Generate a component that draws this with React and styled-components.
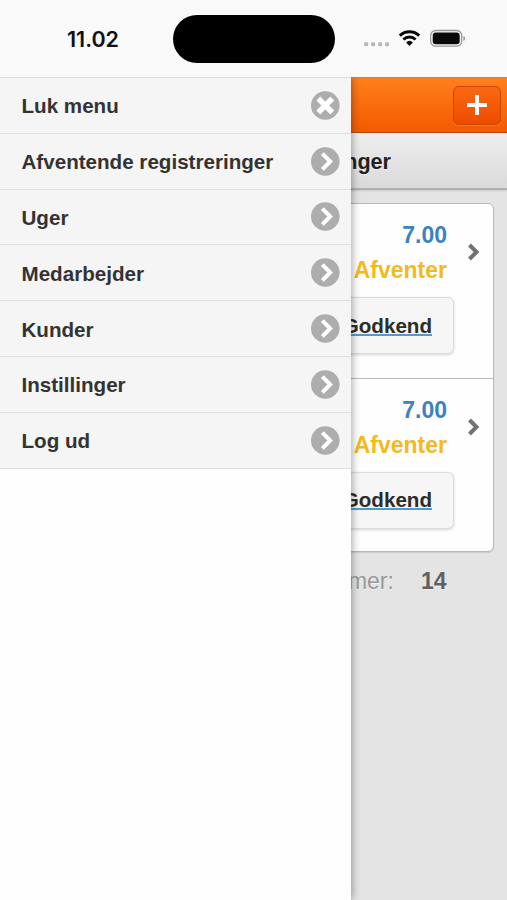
import styled, { createGlobalStyle } from "styled-components";

const GlobalStyle = createGlobalStyle`
  *, *::before, *::after {
    box-sizing: border-box;
  }

  body {
    margin: 0;
    background-color: #e4e4e4;
    font-family: "Liberation Sans", Arial, sans-serif;
    font-size: 20.6px;
  }

  h1, p, ul {
    margin: 0;
    padding: 0;
  }
`;

const Screen = styled.div`
  display: flex;
  flex-direction: column;
  width: 507px;
  height: 900px;
  overflow: hidden;
`;

const StatusBar = styled.header`
  display: grid;
  grid-template-columns: 173px 162px 1fr;
  align-items: center;
  flex: none;
  height: 77px;
  background-color: #f9f9f9;
`;

const Time = styled.time`
  padding-left: 67px;
  color: #111;
  font-family: Inter, sans-serif;
  font-size: 21.5px;
  font-weight: 600;
`;

const Island = styled.div`
  height: 48px;
  border-radius: 24px;
  background-color: #000;
`;

const StatusIcons = styled.div`
  display: flex;
  padding-left: 28px;

  svg {
    display: block;
  }
`;

const Body = styled.div`
  position: relative;
  flex: 1;
  min-height: 0;
`;

const Drawer = styled.nav`
  position: absolute;
  top: 0;
  bottom: 0;
  left: 0;
  width: 351px;
  background-color: #fefefe;
  box-shadow: 1px 0 8px rgba(0, 0, 0, 0.36);
  clip-path: inset(0 -20px 0 0);
`;

const MenuList = styled.ul`
  list-style: none;
  border-top: 1px solid #dedede;
`;

const MenuItem = styled.li`
  display: flex;
  align-items: center;
  justify-content: space-between;
  height: 55.8px;
  padding: 0 11px 0 21.5px;
  border-bottom: 1.5px solid #dfdfdf;
  background-color: #f5f5f5;
  color: #333;
  font-weight: 700;
  text-shadow: 0 1px 0 #f3f3f3;

  svg {
    flex: none;
  }
`;

const MenuLabel = styled.span`
  padding-top: 2px;
`;

const Page = styled.main`
  display: flex;
  flex-direction: column;
  height: 100%;
  background-color: #e4e4e4;
`;

const Toolbar = styled.div`
  display: flex;
  align-items: center;
  justify-content: flex-end;
  flex: none;
  height: 56px;
  padding-right: 6px;
  border-top: 1px solid #e87a20;
  border-bottom: 1px solid #b84a08;
  background: linear-gradient(#ff7f1c, #f45a00);
`;

const AddButton = styled.button`
  display: grid;
  place-items: center;
  width: 48px;
  height: 39px;
  padding: 0;
  border: 1.5px solid #c94600;
  border-radius: 6px;
  background: linear-gradient(#fa6812, #ee4c00);
  box-shadow: 0 1px 0 rgba(255, 160, 80, 0.35);
`;

const TitleBar = styled.div`
  display: flex;
  align-items: center;
  justify-content: flex-end;
  flex: none;
  height: 57px;
  padding: 3px 116px 0 0;
  border-bottom: 2px solid #b0b0b0;
  background: linear-gradient(#eee, #dadada);
  box-shadow: 0 1px 2px rgba(0, 0, 0, 0.12);
`;

const Title = styled.h1`
  color: #222;
  font-size: 21.6px;
  white-space: nowrap;
  text-shadow: 0 1px 0 #eee;
`;

const Card = styled.section`
  margin: 13px 13px 0;
  border: 1.5px solid #b8b8b8;
  border-radius: 6px;
  background-color: #fefefe;
  box-shadow: 0 1px 1px rgba(0, 0, 0, 0.12);
`;

const Entry = styled.article`
  display: grid;
  grid-template-columns: 1fr 46px;
  height: 173.5px;

  & + & {
    border-top: 1.5px solid #bbb;
  }
`;

const EntryInfo = styled.div`
  display: flex;
  flex-direction: column;
  align-items: flex-end;
  padding-top: 14px;
  font-size: 23px;
  font-weight: 700;
  line-height: 35px;
`;

const Hours = styled.p`
  color: #3a82c0;
`;

const State = styled.p`
  color: #f3b91d;
`;

const Approve = styled.button`
  width: 134px;
  height: 57px;
  margin: 9px -7px 0 0;
  padding: 0 21px 0 0;
  border: 1.5px solid #dcdcdc;
  border-radius: 6px;
  background-color: #f6f6f6;
  box-shadow: 0 1px 3px rgba(0, 0, 0, 0.16);
  color: #2c2c2c;
  font: 700 20.6px "Liberation Sans", Arial, sans-serif;
  text-align: right;
  text-decoration: underline;
  text-decoration-color: #5598ce;
  text-decoration-thickness: 1.5px;
  text-underline-offset: 1px;
  text-decoration-skip-ink: none;
`;

const EntryArrow = styled.div`
  padding: 38px 0 0 20px;
`;

const Total = styled.p`
  display: flex;
  justify-content: flex-end;
  gap: 27px;
  padding: 15px 60.5px 0 0;
  color: #999;
  font-size: 23px;
  line-height: 28px;
  text-shadow: 0 1px 0 #f3f3f3;

  strong {
    color: #606060;
  }
`;

const menuItems = [
  "Luk menu",
  "Afventende registreringer",
  "Uger",
  "Medarbejder",
  "Kunder",
  "Instillinger",
  "Log ud",
];

const entries = [
  { id: 1, hours: "7.00", state: "Afventer" },
  { id: 2, hours: "7.00", state: "Afventer" },
];

function CircleIcon({ close }) {
  return (
    <svg width="29" height="29" viewBox="0 0 29 29" fill="none">
      <circle cx="14.3" cy="14.5" r="14.3" fill="#adadad" />
      {close ? (
        <path d="m7.3 7.5 14 14m0-14-14 14" stroke="#fff" strokeWidth="5.4" />
      ) : (
        <path d="m11.4 6.7 7.8 7.8-7.8 7.8" stroke="#fff" strokeWidth="4" />
      )}
    </svg>
  );
}

function StatusSymbols() {
  return (
    <svg width="104" height="24" viewBox="0 0 104 24" fill="none">
      <g fill="#b8b8b8">
        <rect x="1" y="15.2" width="4.2" height="4" rx="1.4" />
        <rect x="8" y="15.2" width="4.2" height="4" rx="1.4" />
        <rect x="15" y="15.2" width="4.2" height="4" rx="1.4" />
        <rect x="22" y="15.2" width="4.2" height="4" rx="1.4" />
      </g>
      <g stroke="#080808" strokeWidth="3">
        <path d="M36.8 8.7a14 14 0 0 1 19.4 0" />
        <path d="M40.4 12.5a8.8 8.8 0 0 1 12.2 0" />
      </g>
      <path d="M43.1 15.4a5 5 0 0 1 6.8 0l-3.4 3.6z" fill="#080808" />
      <rect x="67.7" y="3.5" width="31" height="15.7" rx="5" stroke="#999" strokeWidth="1.3" />
      <rect x="69.7" y="5.5" width="27" height="11.7" rx="3.2" fill="#080808" />
      <path d="M100.4 8.9c2.3.9 2.3 4.1 0 5z" fill="#999" />
    </svg>
  );
}

function App() {
  return (
    <>
      <GlobalStyle />
      <Screen>
        <StatusBar>
          <Time>11.02</Time>
          <Island />
          <StatusIcons>
            <StatusSymbols />
          </StatusIcons>
        </StatusBar>

        <Body>
          <Page>
            <Toolbar>
              <AddButton aria-label="Tilføj">
                <svg width="20" height="20" viewBox="0 0 20 20">
                  <path d="M10 0v20M0 10h20" stroke="#fff" strokeWidth="4" />
                </svg>
              </AddButton>
            </Toolbar>
            <TitleBar>
              <Title>Registreringer</Title>
            </TitleBar>

            <Card>
              {entries.map((entry) => (
                <Entry key={entry.id}>
                  <EntryInfo>
                    <Hours>{entry.hours}</Hours>
                    <State>{entry.state}</State>
                    <Approve>Godkend</Approve>
                  </EntryInfo>
                  <EntryArrow>
                    <svg width="14" height="18" viewBox="0 0 14 18" fill="none">
                      <path d="m2.5 2 7 7-7 7" stroke="#737373" strokeWidth="4" />
                    </svg>
                  </EntryArrow>
                </Entry>
              ))}
            </Card>

            <Total>
              <span>Timer:</span>
              <strong>14</strong>
            </Total>
          </Page>

          <Drawer>
            <MenuList>
              {menuItems.map((label, i) => (
                <MenuItem key={label}>
                  <MenuLabel>{label}</MenuLabel>
                  <CircleIcon close={i === 0} />
                </MenuItem>
              ))}
            </MenuList>
          </Drawer>
        </Body>
      </Screen>
    </>
  );
}

export default App;
